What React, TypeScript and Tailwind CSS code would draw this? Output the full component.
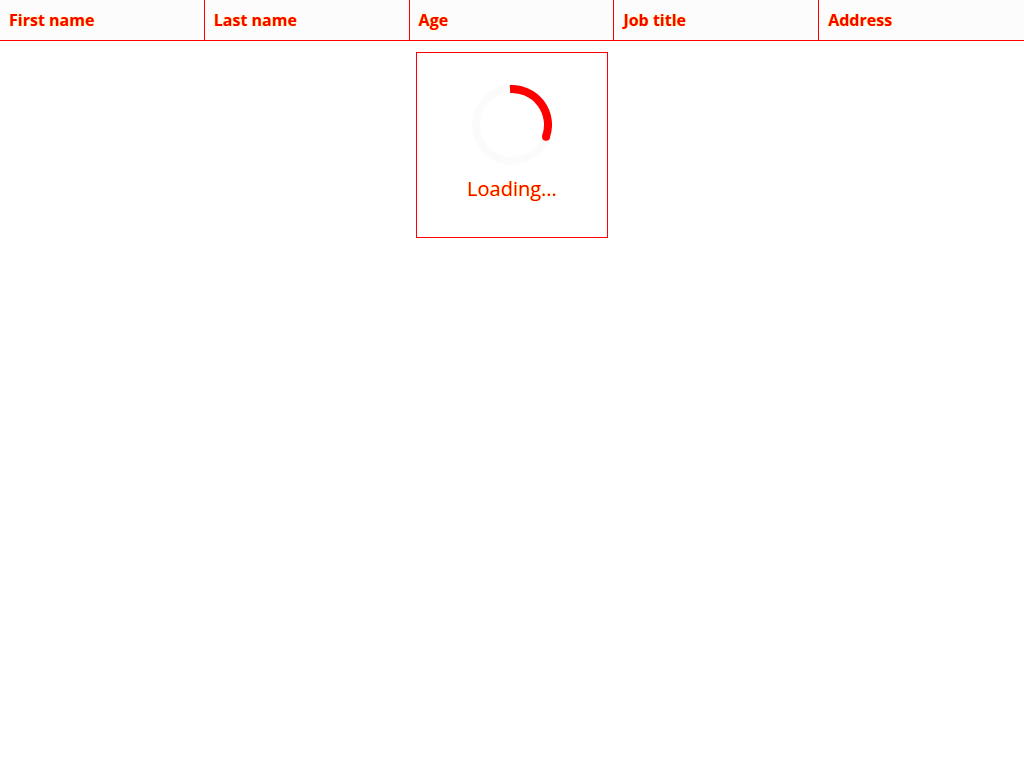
import React from "react";

const cols = ["First name", "Last name", "Age", "Job title", "Address"];

const halo = { textShadow: "0 0 1px #ffff00" } as const;

export default function App() {
  return (
    <div className="min-h-[768px] w-full bg-white" style={{ fontFamily: '"Open Sans", sans-serif' }}>
      <div className="grid grid-cols-5 h-[41px] border-b border-[#ff0000] bg-[#fcfcfc]">
        {cols.map((c, i) => (
          <div
            key={c}
            className={`flex items-center px-[9px] text-[16px] leading-[22px] font-bold text-[#ff0000] ${i < 4 ? "border-r border-[#ff0000]" : ""}`}
            style={halo}
          >
            {c}
          </div>
        ))}
      </div>
      <div className="flex justify-center pt-[11px]">
        <div className="w-[192px] border border-[#ff0000] bg-white flex flex-col items-center pt-[32px] pb-[34px]">
          <svg width="80" height="80" viewBox="0 0 80 80">
            <circle cx="40" cy="40" r="36" fill="none" stroke="#fbfbfb" strokeWidth="8" />
            <path
              d="M 38 4 A 36 36 0 0 1 74.04 51.72"
              fill="none"
              stroke="#ff0000"
              strokeWidth="8"
              strokeLinecap="butt"
            />
            <circle cx="74.04" cy="51.72" r="4" fill="#ff0000" />
          </svg>
          <div className="mt-[10px] text-[20px] leading-[28px] text-[#ff0000]" style={halo}>
            Loading...
          </div>
        </div>
      </div>
    </div>
  );
}
